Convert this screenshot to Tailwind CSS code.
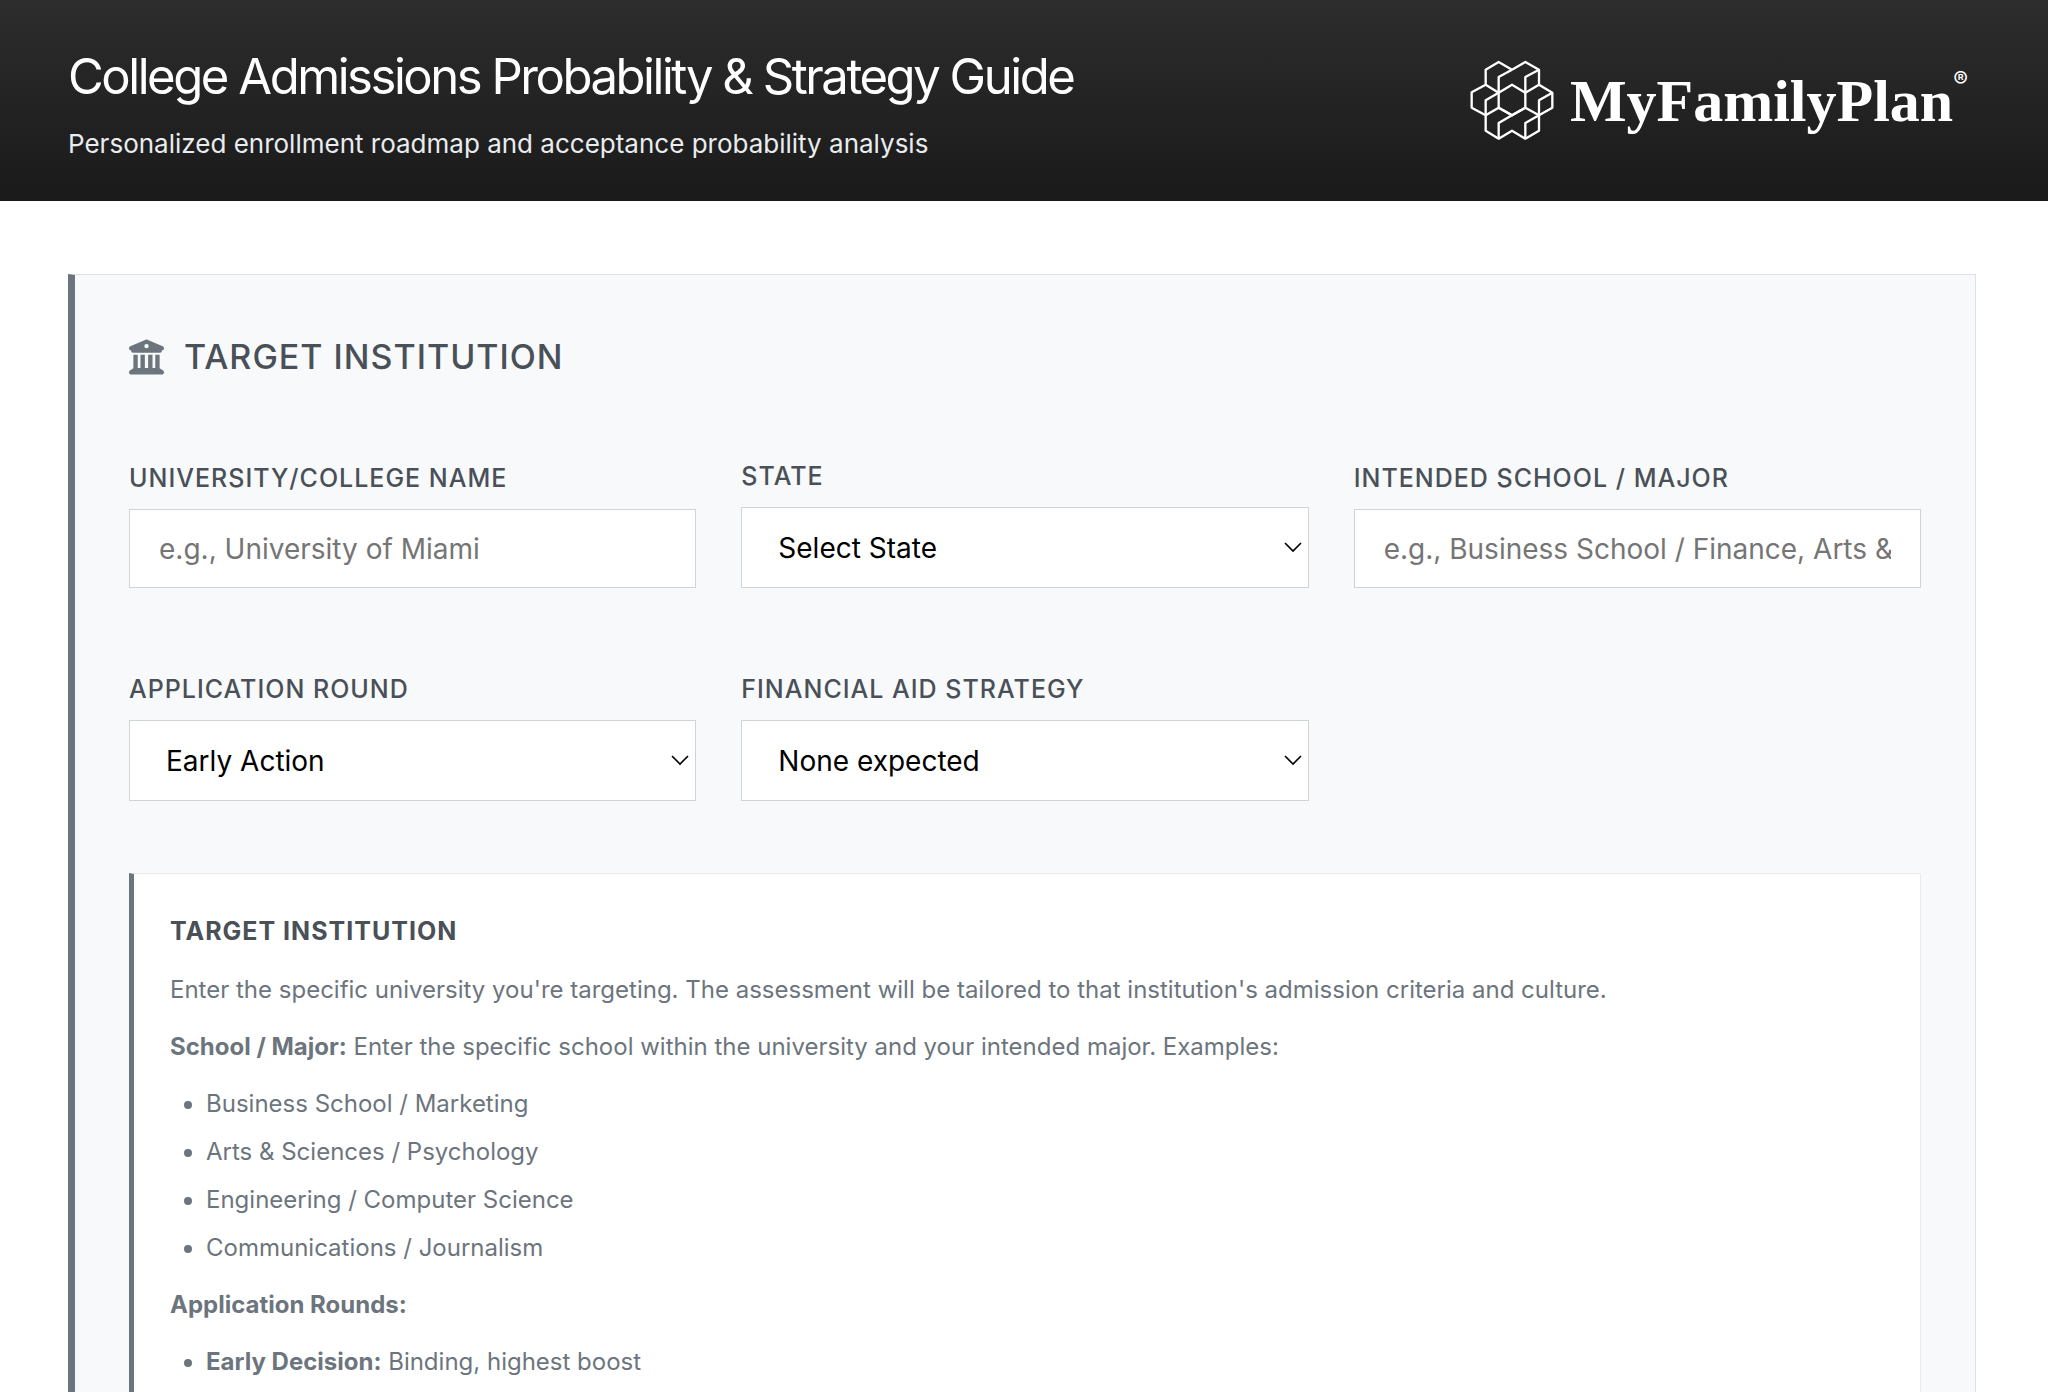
<!DOCTYPE html>
<html lang="en">
<head>
  <meta charset="UTF-8" />
  <meta name="viewport" content="width=device-width, initial-scale=1.0" />
  <title>College Admissions Probability &amp; Strategy Guide</title>
  <!-- Tailwind CDN -->
  <script src="https://cdn.jsdelivr.net/npm/@tailwindcss/browser@4"></script>
</head>
<body class="bg-white font-['Inter',sans-serif] text-[#495057]">
  <!-- ---------- HEADER ---------- -->
  <header class="flex items-center justify-between bg-linear-to-b from-[#2d2d2d] to-[#1a1a1a] px-[68px] pt-[45px] pb-[35px]">
    <div>
      <h1 class="text-[49px] leading-[64px] tracking-tighter text-white">College Admissions Probability &amp; Strategy Guide</h1>
      <p class="mt-3 text-[26px] leading-[45px] text-[#e9ecef]">Personalized enrollment roadmap and acceptance probability analysis</p>
    </div>
    <a href="#" class="mb-[10px] flex items-center gap-4 pr-3 text-white">
      <svg class="h-[82px] w-[84px]" viewBox="28 29 252 246" fill="none" stroke="currentColor" stroke-width="7" stroke-linejoin="round" aria-hidden="true">
        <path d="M154 58 114 35 75 58V103L33 126V172L75 195" />
        <path d="M154 58 194 35 235 58V103L275 127V172L235 195" />
        <path d="M154 58 114 80V172L154 195 194 172V80L235 58" />
        <path d="M75 103 114 127 154 103 194 127 235 103" />
        <path d="M114 127 75 150V241L114 265 154 241 194 265 235 241V150L275 127" />
        <path d="M75 195 114 172 154 195 114 218V265" />
        <path d="M154 195 194 172 235 195 194 218V265" />
      </svg>
      <span class="flex items-start font-['Liberation_Serif',serif] text-[60px] leading-[72px] font-bold">MyFamilyPlan<sup class="top-0 font-['Inter',sans-serif] text-[22px] leading-7 font-normal">®</sup></span>
    </a>
  </header>

  <!-- ---------- FORM ---------- -->
  <main class="py-[73px] pr-[72px] pl-[68px]">
    <section class="border border-l-[7px] border-[#dee2e6] border-l-[#6c757d] bg-[#f8f9fb] px-[54px] pt-[60px] pb-16">
      <h2 class="mb-[76px] flex items-center gap-5 text-[34px] leading-[44px] font-medium tracking-[1px]">
        <svg class="h-9 w-[35px] text-[#6c757d]" viewBox="0 0 512 512" fill="currentColor" aria-hidden="true">
          <path d="M243.4 2.6l-224 96c-14 6-21.8 21-18.7 35.8S16.8 160 32 160v8c0 13.3 10.7 24 24 24H456c13.3 0 24-10.7 24-24v-8c15.2 0 28.3-10.7 31.3-25.6s-4.8-29.9-18.7-35.8l-224-96c-8-3.4-17.2-3.4-25.2 0zM128 224H64V420.3c-.6 .3-1.2 .7-1.8 1.1l-48 32c-11.7 7.8-17 22.4-12.9 35.9S17.9 512 32 512H480c14.1 0 26.5-9.2 30.6-22.7s-1.1-28.1-12.9-35.9l-48-32c-.6-.4-1.2-.7-1.8-1.1V224H384V416H344V224H280V416H232V224H168V416H128V224zM256 64a32 32 0 1 1 0 64 32 32 0 1 1 0-64z" />
        </svg>
        TARGET INSTITUTION
      </h2>

      <div class="grid grid-cols-3 items-end gap-x-[45px] gap-y-20">
        <div class="flex flex-col gap-[10px]">
          <label for="university" class="text-[25px] leading-[42px] font-medium tracking-[1px]">UNIVERSITY/COLLEGE NAME</label>
          <input id="university" type="text" placeholder="e.g., University of Miami" class="h-[79px] w-full border border-[#ced4da] bg-white px-[29px] text-[28px] text-black placeholder:text-[#757575]" />
        </div>
        <div class="flex flex-col gap-[10px]">
          <label for="state" class="text-[25px] leading-[42px] font-medium tracking-[1px]">STATE</label>
          <div class="relative">
            <select id="state" class="h-[81px] w-full appearance-none border border-[#ced4da] bg-white px-9 text-[28px] text-black">
              <option>Select State</option>
            </select>
            <svg class="pointer-events-none absolute top-8 right-[6px] h-4 w-5" viewBox="0 0 20 16" fill="none" stroke="#000" stroke-width="1.7" aria-hidden="true"><path d="M2 4l8 8 8-8" /></svg>
          </div>
        </div>
        <div class="flex flex-col gap-[10px]">
          <label for="major" class="text-[25px] leading-[42px] font-medium tracking-[1px]">INTENDED SCHOOL / MAJOR</label>
          <input id="major" type="text" placeholder="e.g., Business School / Finance, Arts &amp;" class="h-[79px] w-full border border-[#ced4da] bg-white px-[29px] text-[28px] text-black placeholder:text-[#757575]" />
        </div>
        <div class="flex flex-col gap-[10px]">
          <label for="round" class="text-[25px] leading-[42px] font-medium tracking-[1px]">APPLICATION ROUND</label>
          <div class="relative">
            <select id="round" class="h-[81px] w-full appearance-none border border-[#ced4da] bg-white px-9 text-[28px] text-black">
              <option>Early Action</option>
            </select>
            <svg class="pointer-events-none absolute top-8 right-[6px] h-4 w-5" viewBox="0 0 20 16" fill="none" stroke="#000" stroke-width="1.7" aria-hidden="true"><path d="M2 4l8 8 8-8" /></svg>
          </div>
        </div>
        <div class="flex flex-col gap-[10px]">
          <label for="aid" class="text-[25px] leading-[42px] font-medium tracking-[1px]">FINANCIAL AID STRATEGY</label>
          <div class="relative">
            <select id="aid" class="h-[81px] w-full appearance-none border border-[#ced4da] bg-white px-9 text-[28px] text-black">
              <option>None expected</option>
            </select>
            <svg class="pointer-events-none absolute top-8 right-[6px] h-4 w-5" viewBox="0 0 20 16" fill="none" stroke="#000" stroke-width="1.7" aria-hidden="true"><path d="M2 4l8 8 8-8" /></svg>
          </div>
        </div>
      </div>

      <!-- ---------- HELP PANEL ---------- -->
      <div class="mt-[72px] border border-l-[5px] border-[#e9ecef] border-l-[#6c757d] bg-white p-9 text-[24px] leading-10 text-[#6c757d]">
        <h3 class="mb-[18px] text-[25px] leading-[42px] font-bold tracking-[1px] text-[#495057]">TARGET INSTITUTION</h3>
        <p class="mb-[17px]">Enter the specific university you're targeting. The assessment will be tailored to that institution's admission criteria and culture.</p>
        <p class="mb-[17px]"><strong>School / Major:</strong> Enter the specific school within the university and your intended major. Examples:</p>
        <ul class="mb-[17px] list-disc pl-9">
          <li class="mb-2">Business School / Marketing</li>
          <li class="mb-2">Arts &amp; Sciences / Psychology</li>
          <li class="mb-2">Engineering / Computer Science</li>
          <li class="mb-2">Communications / Journalism</li>
        </ul>
        <p class="mb-[17px]"><strong>Application Rounds:</strong></p>
        <ul class="mb-[17px] list-disc pl-9">
          <li class="mb-2"><strong>Early Decision:</strong> Binding, highest boost</li>
        </ul>
      </div>
    </section>
  </main>
</body>
</html>
